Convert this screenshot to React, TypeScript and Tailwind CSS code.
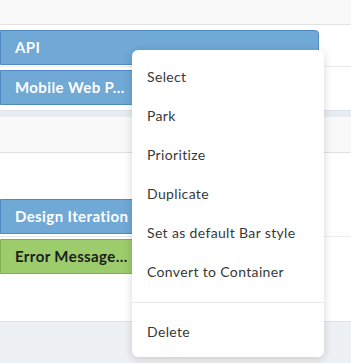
const items = ['Select', 'Park', 'Prioritize', 'Duplicate', 'Set as default Bar style', 'Convert to Container'];

function Bar({ label, green, width }: { label: string; green?: boolean; width: string }) {
  return (
    <div
      className={`${width} h-[35px] flex items-center pl-[14px] rounded-r-[4px] border text-[15px] font-bold tracking-[0.4px] ${
        green
          ? 'bg-[#9ccc6c] border-[#7eb24e] text-[#1d1d1d]'
          : 'bg-[#70a8d6] border-[#4f8bc2] text-white'
      }`}
    >
      {label}
    </div>
  );
}

export default function App() {
  return (
    <div className="relative w-[351px] h-[363px] overflow-hidden bg-white" style={{ fontFamily: 'Lato, "Noto Sans", sans-serif' }}>
      {/* header strip */}
      <div className="h-[25px] bg-[#f9f9f9] border-b border-[#e3e3e3]" />

      <div className="h-[42px] pt-[5px] border-b border-[#ececec]">
        <Bar label="API" width="w-[319px]" />
      </div>
      <div className="h-[43px] pt-[3px]">
        <Bar label="Mobile Web P..." width="w-[220px]" />
      </div>

      {/* group row */}
      <div className="h-[7px] bg-[#e7ecf0] border-t border-[#dde3e8]" />
      <div className="h-[36px] bg-[#f9f9f9] border-b border-[#e0e0e0]" />

      <div className="h-[46px]" />
      <div className="h-[38px] border-b border-[#ececec]">
        <Bar label="Design Iteration" width="w-[220px]" />
      </div>
      <div className="h-[38px] pt-[2px]">
        <Bar label="Error Message..." green width="w-[220px]" />
      </div>
      <div className="h-[47px] border-b border-[#dfe3e7]" />
      <div className="h-[41px] bg-[#eef1f4]" />

      {/* context menu */}
      <div className="absolute left-[132px] top-[50px] w-[192px] h-[307px] bg-white rounded-[6px] shadow-[0_2px_10px_rgba(0,0,0,0.16)] text-[14px] tracking-[0.35px] text-[#383838] flex flex-col">
        <div className="pt-[7px]">
          {items.map((t) => (
            <div key={t} className="h-[39px] flex items-center px-[15px]">
              {t}
            </div>
          ))}
        </div>
        <div className="mt-[11px] border-t border-[#e8e8e8]" />
        <div className="flex-1 flex items-center px-[15px] pt-[3px]">Delete</div>
      </div>
    </div>
  );
}
